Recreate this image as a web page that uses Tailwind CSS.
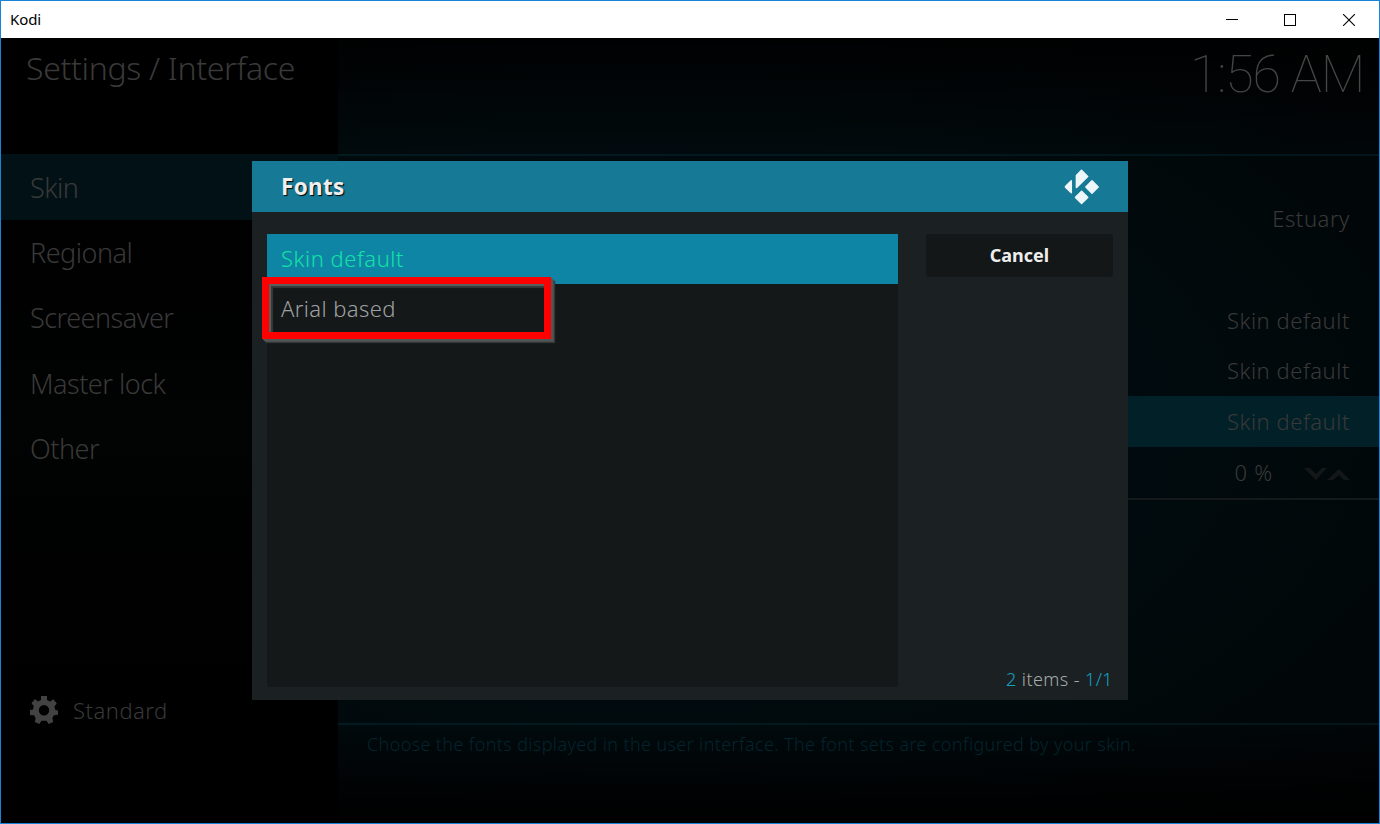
<!DOCTYPE html>
<html lang="en">
<head>
<meta charset="utf-8">
<title>Kodi</title>
<script src="https://cdn.jsdelivr.net/npm/@tailwindcss/browser@4"></script>
</head>
<body class="w-[1380px] h-[824px] overflow-hidden bg-black font-['Noto_Sans',sans-serif]">
<div class="relative flex h-[824px] w-[1380px] flex-col border border-[#1883d7] bg-black">
  <header class="flex h-[37px] shrink-0 items-center justify-between bg-white pl-[9px] text-black">
    <span class="pb-[2px] text-[15px] leading-5 tracking-[-0.1px]">Kodi</span>
    <div class="flex items-center pr-[24px]">
      <svg class="h-3 w-3" viewBox="0 0 12 12" shape-rendering="crispEdges"><rect y="5" width="12" height="1"/></svg>
      <svg class="ml-[46px] h-3 w-3" viewBox="0 0 12 12" fill="none" stroke="#000" shape-rendering="crispEdges"><rect x=".5" y=".5" width="11" height="11"/></svg>
      <svg class="ml-[47px] h-3 w-3" viewBox="0 0 12 12" fill="none" stroke="#000" stroke-width="1.1"><path d="M0 0L12 12M12 0L0 12"/></svg>
    </div>
  </header>

  <div class="flex min-h-0 flex-1 text-[#393939]">
    <aside class="flex w-[337px] shrink-0 flex-col bg-linear-to-b from-black via-[#020303] to-black">
      <h1 class="h-[116px] pl-[25px] pt-[8px] text-[32px] leading-[44px] font-light tracking-[-0.32px]"><span>Settings / Interface</span></h1>
      <nav class="flex flex-col text-[27px] font-light tracking-[-0.5px]">
        <div class="flex h-[66px] items-center bg-[#021116] pt-[2px] pl-[29px]"><span>Skin</span></div>
        <div class="flex h-[65px] items-center pt-[2px] pl-[29px]"><span>Regional</span></div>
        <div class="flex h-[65px] items-center pt-[2px] pl-[29px]"><span>Screensaver</span></div>
        <div class="flex h-[66px] items-center pt-[2px] pl-[29px]"><span>Master lock</span></div>
        <div class="flex h-[65px] items-center pt-[2px] pl-[29px]"><span>Other</span></div>
      </nav>
      <div class="mt-auto mb-[97px] flex h-8 items-center pl-[29px] text-[22px] font-light tracking-[0.5px]">
        <svg class="mr-[15px] h-[28px] w-[28px]" viewBox="0 0 28 28"><g fill="#424242"><path fill-rule="evenodd" d="M11 0h6v4l3.300 1.500 3-2.300 3.500 4.300-2.400 3 .9 3.500 2.700.6v4.200l-4 .5-1.700 2.800 1 3.800-4.600 2-2.200-3.200h-5L9.300 28l-4.600-2 1-3.800L4 19.300 0 19v-5l3-.5.700-3.400-2.200-2.900L5 3l2.800 2.400L11 4zM14 9a5.200 5.200 0 1 0 0 10.400A5.200 5.200 0 0 0 14 9z"/></g></svg>
        <span>Standard</span>
      </div>
    </aside>

    <main class="flex flex-1 flex-col bg-[radial-gradient(ellipse_at_30%_50%,#000a12_0%,#010a0d_55%,#010405_100%)]">
      <div class="flex h-[116px] justify-end bg-linear-to-b from-black/80 to-transparent pr-[15px] font-['Roboto'] text-[52px] leading-[73px] font-thin tracking-[-1.25px]"><span class="text-[#454545]">1:56 AM</span></div>
      <div class="h-[2px] bg-linear-to-r from-[#021b21] to-[#02161b]"></div>
      <div class="flex flex-col pt-[38px] text-right text-[22px] font-light tracking-[0.55px]">
        <div class="h-[51px] pr-[29px] leading-[49px]"><span>Estuary</span></div>
        <div class="h-[51px]"></div>
        <div class="h-[50px] pr-[29px] leading-[49px]"><span>Skin default</span></div>
        <div class="h-[50px] pr-[29px] leading-[49px]"><span>Skin default</span></div>
        <div class="h-[51px] bg-[#022027] pr-[29px] leading-[50px]"><span>Skin default</span></div>
        <div class="flex h-[51px] items-center justify-end pr-[29px]"><span class="tracking-[0.8px]">0 %</span>
          <svg class="mt-[2px] ml-[31px] h-3 w-[46px]" viewBox="0 0 46 12" fill="#131717"><path d="M0 0h6l6 6 6-6h5L12 12zM23 12L35 1l11 11h-6l-5-5-6 5z"/></svg>
        </div>
      </div>
      <div class="h-[2px] bg-[#16191a]"></div>
      <div class="mt-auto h-[2px] bg-linear-to-r from-[#021a21] to-[#02171c]"></div>
      <div class="h-[98px] bg-linear-to-b from-transparent to-black pl-[29px] pt-[3px] text-[18px] leading-8 font-light tracking-[0.37px] text-[#02252f]"><span>Choose the fonts displayed in the user interface. The font sets are configured by your skin.</span></div>
    </main>
  </div>

  <section class="absolute left-[251px] top-[160px] flex h-[539px] w-[876px] flex-col bg-[#1b2123]">
    <div class="flex h-[51px] shrink-0 items-center justify-between bg-[#167996] pl-[29px] pr-[28px]">
      <h2 class="text-[22.500px] font-bold tracking-[0.3px] text-[#eee] [text-shadow:1px_1px_1px_#000]"><span>Fonts</span></h2>
      <svg class="h-9 w-9" viewBox="0 0 36 36" fill="#edf6f8" stroke="#edf6f8" stroke-linejoin="round" stroke-width="1.500"><path d="M17.500 1.300L23.700 7.500L12.600 18.500H12.400V6.500zM7.300 11.800V23.700L1.500 18.300V17.500zM28 11.900L34.200 18L28 24.200L21.800 18zM17.600 22.200L23.700 28.400L17.600 34.500L11.500 28.400z"/></svg>
    </div>
    <div class="flex flex-1 pt-[22px] pl-[15px] pr-[15px] pb-[13px]">
      <div class="w-[631px] shrink-0 rounded-[3px] bg-[#141819] text-[22px] font-light tracking-[0.55px]">
        <div class="flex h-[50px] items-center bg-[#0f85a5] pb-[2px] pl-[14px] text-[#12e2a5]"><span>Skin default</span></div>
        <div class="flex h-[51px] items-center pb-[2px] pl-[14px] tracking-[0.4px] text-[#a0a1a2]"><span>Arial based</span></div>
      </div>
      <div class="ml-[28px] flex flex-1 flex-col">
        <button class="h-[43px] w-[187px] rounded-[3px] bg-[#141718] text-[18px] font-bold text-[#eee]"><span>Cancel</span></button>
        <div class="mt-auto mb-[-6px] text-right text-[18px] leading-7 font-light tracking-[0.4px] text-[#a7a9aa]"><span><span class="text-[#12a0c7]">2</span> items - <span class="text-[#12a0c7]">1/1</span></span></div>
      </div>
    </div>
  </section>
  <div class="absolute left-[261px] top-[276px] h-[62px] w-[289px] border-7 border-[#f00] shadow-[1px_1px_0_#555,2px_2px_0_#535555,3px_3px_0_#4a4d4d,4px_4px_1px_#353839,inset_2px_2px_0_#5c5e5e,inset_4px_4px_1px_#373a3b]"></div>
</div>
</body>
</html>
